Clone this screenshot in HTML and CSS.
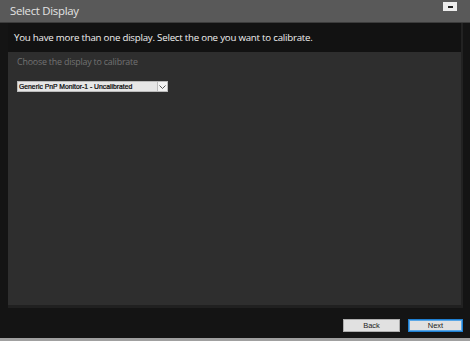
FILE: index.html
```html
<!DOCTYPE html>
<html lang="en">
<head>
  <meta charset="UTF-8" />
  <title>Select Display</title>
  <link rel="stylesheet" href="styles.css">
</head>
<body>
  <header class="titlebar">
    <span class="title">Select Display</span>
    <button class="min-btn" aria-label="Minimize"><span></span></button>
  </header>
  <div class="window">
    <main class="panel">
      <div class="panel-head">You have more than one display. Select the one you want to calibrate.</div>
      <div class="panel-body">
        <div class="hint">Choose the display to calibrate</div>
        <div class="select">
          <span class="select-value">Generic PnP Monitor-1 - Uncalibrated</span>
          <span class="select-arrow">
            <svg width="7" height="4" viewBox="0 0 7 4"><path d="M0.5 0.5 L3.5 3.5 L6.5 0.5" fill="none" stroke="#555" stroke-width="1"/></svg>
          </span>
        </div>
      </div>
    </main>
    <footer class="actions">
      <button class="btn">Back</button>
      <button class="btn primary">Next</button>
    </footer>
  </div>
  <div class="bottom-line"></div>
</body>
</html>
```
FILE: styles.css
```css
:root {
  --title-bg: #595959;
  --page-bg: #141414;
  --panel-bg: #2e2e2e;
  --head-bg: #121212;
  --text: #f0f0f0;
  --text-dim: #727272;
}
* { box-sizing: border-box; margin: 0; padding: 0; }
body {
  width: 470px;
  height: 341px;
  overflow: hidden;
  display: flex;
  flex-direction: column;
  font-family: 'Open Sans', 'Noto Sans', sans-serif;
  background: var(--page-bg);
  color: var(--text);
}
.titlebar {
  height: 23px;
  background: var(--title-bg);
  border-bottom: 1px solid #3c3c3c;
  display: flex;
  align-items: flex-start;
  justify-content: space-between;
  padding: 0 13px 0 10px;
}
.title {
  font-size: 11.4px;
  letter-spacing: -0.3px;
  line-height: 22px;
  color: #e4e4e4;
}
.min-btn {
  margin-top: 2px;
  width: 14px;
  height: 9px;
  background: #ececec;
  border: none;
  display: flex;
  align-items: center;
  justify-content: center;
}
.min-btn span {
  width: 5px;
  height: 2px;
  background: #222;
}
.window {
  flex: 1;
  display: flex;
  flex-direction: column;
  padding: 0 7px 0 8px;
}
.panel {
  height: 285px;
  display: flex;
  flex-direction: column;
  border-right: 2px solid #222;
  border-bottom: 3px solid #202020;
}
.panel-head {
  height: 29px;
  background: var(--head-bg);
  font-size: 9.7px;
  letter-spacing: -0.22px;
  line-height: 30px;
  padding-left: 6px;
  white-space: nowrap;
}
.panel-body {
  flex: 1;
  background: var(--panel-bg);
  padding: 3px 0 0 9px;
}
.hint {
  font-size: 8.9px;
  letter-spacing: -0.2px;
  color: var(--text-dim);
  line-height: 14px;
}
.select {
  margin-top: 12px;
  width: 151px;
  height: 11px;
  display: flex;
  background: #e6e6e6;
  border: 1px solid #bbb;
}
.select-value {
  flex: 1;
  font-family: 'Liberation Sans', sans-serif;
  font-size: 6.8px;
  line-height: 9px;
  color: #000;
  padding-left: 1px;
  white-space: nowrap;
  overflow: hidden;
  -webkit-text-stroke: 0.2px #000;
}
.select-arrow {
  width: 10px;
  background: #f2f2f2;
  border-left: 1px solid #bbb;
  display: flex;
  align-items: center;
  justify-content: center;
}
.actions {
  display: flex;
  justify-content: flex-end;
  gap: 8px;
  padding-top: 11px;
}
.btn {
  width: 57px;
  height: 13px;
  background: #e1e1e1;
  border: 1px solid #adadad;
  font-family: 'Liberation Sans', sans-serif;
  font-size: 7.5px;
  color: #222;
  line-height: 11px;
}
.btn.primary {
  width: 55px;
  border: 1px solid #1f7fd0;
  box-shadow: inset 0 0 0 1px #5aa7e6;
}
.bottom-line {
  height: 3px;
  background: #a0a0a0;
}
```
